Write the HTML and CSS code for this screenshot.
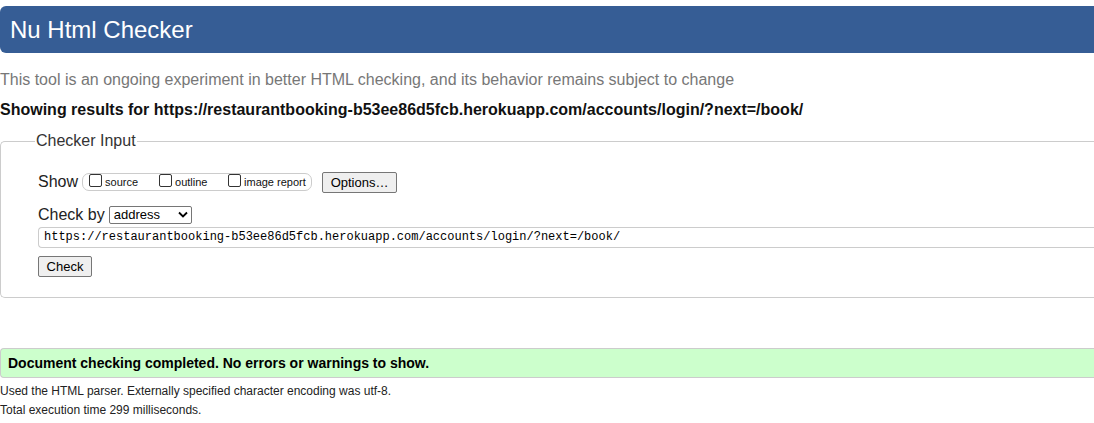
FILE: index.html
```html
<!DOCTYPE html>
<html>
<head>
<meta charset="utf-8">
<link rel="stylesheet" href="styles.css">
</head>
<body>
<div class="page">
  <h1 class="header">Nu Html Checker</h1>
  <p class="intro">This tool is an ongoing experiment in better HTML checking, and its behavior remains subject to change</p>
  <p class="showing">Showing results for https://restaurantbooking-b53ee86d5fcb.herokuapp.com/accounts/login/?next=/book/</p>
  <fieldset class="input">
    <legend class="legend">Checker Input</legend>
    <div class="row show-row">
      <span class="lbl">Show</span>
      <span class="opts">
        <label class="opt"><span class="cb"></span>source</label>
        <label class="opt"><span class="cb"></span>outline</label>
        <label class="opt"><span class="cb"></span>image report</label>
      </span>
      <span class="btn opt-btn">Options…</span>
    </div>
    <div class="row by-row">
      <span class="lbl">Check by</span>
      <span class="select">address<svg class="chev" width="10" height="7" viewBox="0 0 10 7"><path d="M1 1.5 L5 5.5 L9 1.5" fill="none" stroke="#000" stroke-width="1.8"/></svg></span>
    </div>
    <div class="url">https://restaurantbooking-b53ee86d5fcb.herokuapp.com/accounts/login/?next=/book/</div>
    <span class="btn check-btn">Check</span>
  </fieldset>
  <p class="success">Document checking completed. No errors or warnings to show.</p>
  <p class="small">Used the HTML parser. Externally specified character encoding was utf-8.</p>
  <p class="small">Total execution time 299 milliseconds.</p>
</div>
</body>
</html>
```
FILE: styles.css
```css
html, body { margin: 0; padding: 0; overflow: hidden; background: #fff; }
body { font-family: "Liberation Sans", Arial, sans-serif; color: #000; }
.page { width: 1200px; padding-top: 6px; }
.header {
  margin: 0; height: 47px; box-sizing: border-box;
  background: #365d95; color: #fff; font-weight: normal;
  font-size: 24px; line-height: 47px; padding-left: 10px;
  border-radius: 6px 0 0 6px;
}
.intro { margin: 17px 0 0 0; font-size: 16px; line-height: 20px; color: #777; }
.showing { margin: 10px 0 0 0; font-size: 16px; line-height: 20px; font-weight: bold; color: #111; }
.input {
  margin: 12px 0 0 0; padding: 0 0 0 37px; border: 1px solid #ccc; border-right: none;
  border-radius: 5px 0 0 5px; height: 166px; box-sizing: border-box; min-width: 0;
}
.legend { margin-left: -3px; padding: 0 1px; font-size: 16px; color: #333; line-height: 18px; }
.row { display: flex; align-items: center; }
.show-row { margin-top: 21px; height: 22px; }
.lbl { font-size: 16px; color: #222; }
.opts {
  display: flex; align-items: center; margin-left: 4px; height: 18px; width: 230px; box-sizing: border-box;
  border: 1px solid #ccc; border-radius: 7px; padding-left: 6px; gap: 0;
}
.opt { display: flex; align-items: center; font-size: 11px; color: #111; }
.opt:nth-child(1) { width: 70px; }
.opt:nth-child(2) { width: 69px; }
.cb { width: 11px; height: 11px; border: 1px solid #333; border-radius: 2px; margin-right: 3px; margin-top: -3px; background: #fff; }
.btn {
  display: inline-block; box-sizing: border-box; background: #efefef; border: 1px solid #767676;
  border-radius: 2px; font-size: 13px; color: #000; text-align: center;
}
.opt-btn { margin-left: 10px; width: 75px; height: 21px; line-height: 19px; }
.by-row { margin-top: 12px; height: 19px; }
.select {
  margin-left: 4px; width: 83px; height: 18px; box-sizing: border-box; border: 1px solid #767676; border-radius: 2px;
  font-size: 13px; display: flex; align-items: center; justify-content: space-between; padding: 0 3px 0 4px;
}
.url {
  margin-top: 3px; height: 21px; box-sizing: border-box; border: 1px solid #ccc; border-right: none;
  border-radius: 4px 0 0 4px; font-family: "Liberation Mono", monospace; font-size: 12px;
  line-height: 19px; padding-left: 5px; color: #000;
}
.check-btn { margin-top: 8px; width: 54px; height: 21px; line-height: 19px; font-size: 13px; }
.success {
  margin: 50px 0 0 0; height: 30px; box-sizing: border-box; background: #ccffcc;
  border: 1px solid #ccc; border-right: none; border-radius: 4px 0 0 4px;
  font-size: 14px; font-weight: bold; line-height: 28px; padding-left: 7px; color: #000;
}
.small { margin: 6px 0 0 0; font-size: 12px; line-height: 14px; color: #222; }
.small + .small { margin-top: 5px; }
```
